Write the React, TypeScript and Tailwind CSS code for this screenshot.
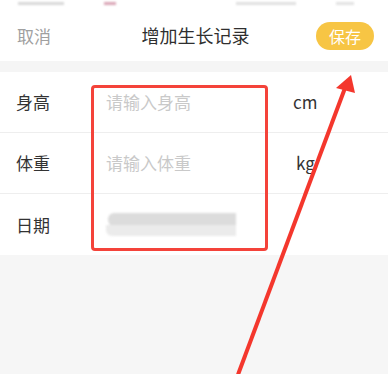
import React from "react";

const font = { fontFamily: '"Noto Sans CJK SC", "Noto Sans", sans-serif' };

function Row({ label, placeholder, unit, unitClass, last }: { label: string; placeholder?: string; unit?: string; unitClass?: string; last?: boolean }) {
  return (
    <div className={`flex h-[61px] items-center bg-white ${last ? "" : "border-b border-[#eeeeee]"}`}>
      <div className="w-[106px] pl-[16px] text-[17px] text-[#333333]">{label}</div>
      <div className="flex-1">
        {placeholder ? (
          <span className="text-[17px] text-[#c9c9c9]">{placeholder}</span>
        ) : (
          <div className="relative h-[24px] w-[132px] blur-[1px]">
            <div className="absolute left-[2px] top-[0px] h-[13px] w-[128px] rounded-l-[6px] bg-[#dcdcdc]" />
            <div className="absolute left-[0px] top-[12px] h-[11px] w-[130px] rounded-bl-[6px] bg-[#ebebeb]" />
          </div>
        )}
      </div>
      {unit ? <div className={`text-[17px] text-[#333333] ${unitClass ?? ""}`}>{unit}</div> : null}
    </div>
  );
}

export default function App() {
  return (
    <div className="relative h-[374px] w-[388px] overflow-hidden bg-[#f6f6f6]" style={font}>
      <div className="bg-white">
        <div className="flex h-[10px] items-start gap-[40px] pl-[18px] pt-[2px] blur-[1px]">
          <div className="h-[3px] w-[46px] bg-[#d8d8d8]" />
          <div className="h-[3px] w-[12px] bg-[#d9a5b5]" />
          <div className="ml-[80px] h-[3px] w-[60px] bg-[#e0e0e0]" />
          <div className="h-[3px] w-[18px] bg-[#e2e2e2]" />
        </div>
        <div className="flex h-[51px] items-center justify-between pl-[17px] pr-[14px]">
          <span className="w-[80px] text-[17px] text-[#a0a0a0]">取消</span>
          <span className="text-[18px] text-[#2f2f2f]">增加生长记录</span>
          <div className="flex w-[80px] justify-end">
            <div className="flex h-[28px] w-[58px] items-center justify-center rounded-full bg-[#f7c544] text-[16px] text-white">
              保存
            </div>
          </div>
        </div>
      </div>
      <div className="h-[11px] bg-[#f5f5f5]" />
      <div>
        <Row label="身高" placeholder="请输入身高" unit="cm" unitClass="w-[95px]" />
        <Row label="体重" placeholder="请输入体重" unit="kg" unitClass="w-[92px]" />
        <Row label="日期" last />
      </div>

      <div className="pointer-events-none absolute left-[91px] top-[85px] h-[166px] w-[177px] rounded-[4px] border-[3px] border-[#f4433a]" />

      <svg className="pointer-events-none absolute left-0 top-0" width="388" height="374" viewBox="0 0 388 374">
        <line x1="236" y1="380" x2="345" y2="88" stroke="#f4372d" strokeWidth="4" />
        <polygon points="351,75 336,88 355,93" fill="#f4372d" />
      </svg>
    </div>
  );
}
